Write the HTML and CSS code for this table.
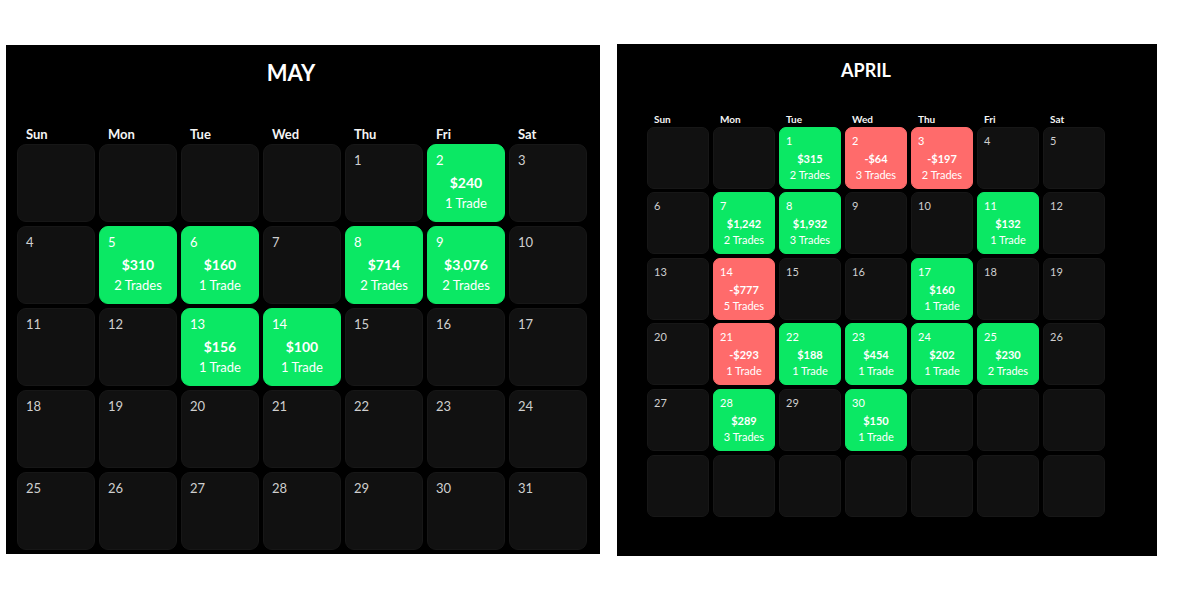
FILE: index.html
```html
<!DOCTYPE html>
<html>
<head>
<meta charset="utf-8">
<link rel="stylesheet" href="styles.css">
</head>
<body>
<div class="page">
  <section class="cal cal-may">
    <h2 class="title">MAY</h2>
    <div class="grid">
      <div class="dow">Sun</div><div class="dow">Mon</div><div class="dow">Tue</div><div class="dow">Wed</div><div class="dow">Thu</div><div class="dow">Fri</div><div class="dow">Sat</div>
      <div class="cell"></div>
      <div class="cell"></div>
      <div class="cell"></div>
      <div class="cell"></div>
      <div class="cell"><span class="num">1</span></div>
      <div class="cell win"><span class="num">2</span><span class="amt">$240</span><span class="trades">1 Trade</span></div>
      <div class="cell"><span class="num">3</span></div>

      <div class="cell"><span class="num">4</span></div>
      <div class="cell win"><span class="num">5</span><span class="amt">$310</span><span class="trades">2 Trades</span></div>
      <div class="cell win"><span class="num">6</span><span class="amt">$160</span><span class="trades">1 Trade</span></div>
      <div class="cell"><span class="num">7</span></div>
      <div class="cell win"><span class="num">8</span><span class="amt">$714</span><span class="trades">2 Trades</span></div>
      <div class="cell win"><span class="num">9</span><span class="amt">$3,076</span><span class="trades">2 Trades</span></div>
      <div class="cell"><span class="num">10</span></div>

      <div class="cell"><span class="num">11</span></div>
      <div class="cell"><span class="num">12</span></div>
      <div class="cell win"><span class="num">13</span><span class="amt">$156</span><span class="trades">1 Trade</span></div>
      <div class="cell win"><span class="num">14</span><span class="amt">$100</span><span class="trades">1 Trade</span></div>
      <div class="cell"><span class="num">15</span></div>
      <div class="cell"><span class="num">16</span></div>
      <div class="cell"><span class="num">17</span></div>

      <div class="cell"><span class="num">18</span></div>
      <div class="cell"><span class="num">19</span></div>
      <div class="cell"><span class="num">20</span></div>
      <div class="cell"><span class="num">21</span></div>
      <div class="cell"><span class="num">22</span></div>
      <div class="cell"><span class="num">23</span></div>
      <div class="cell"><span class="num">24</span></div>

      <div class="cell"><span class="num">25</span></div>
      <div class="cell"><span class="num">26</span></div>
      <div class="cell"><span class="num">27</span></div>
      <div class="cell"><span class="num">28</span></div>
      <div class="cell"><span class="num">29</span></div>
      <div class="cell"><span class="num">30</span></div>
      <div class="cell"><span class="num">31</span></div>
    </div>
  </section>

  <section class="cal cal-apr">
    <h2 class="title">APRIL</h2>
    <div class="grid">
      <div class="dow">Sun</div><div class="dow">Mon</div><div class="dow">Tue</div><div class="dow">Wed</div><div class="dow">Thu</div><div class="dow">Fri</div><div class="dow">Sat</div>
      <div class="cell"></div>
      <div class="cell"></div>
      <div class="cell win"><span class="num">1</span><span class="amt">$315</span><span class="trades">2 Trades</span></div>
      <div class="cell loss"><span class="num">2</span><span class="amt">-$64</span><span class="trades">3 Trades</span></div>
      <div class="cell loss"><span class="num">3</span><span class="amt">-$197</span><span class="trades">2 Trades</span></div>
      <div class="cell"><span class="num">4</span></div>
      <div class="cell"><span class="num">5</span></div>

      <div class="cell"><span class="num">6</span></div>
      <div class="cell win"><span class="num">7</span><span class="amt">$1,242</span><span class="trades">2 Trades</span></div>
      <div class="cell win"><span class="num">8</span><span class="amt">$1,932</span><span class="trades">3 Trades</span></div>
      <div class="cell"><span class="num">9</span></div>
      <div class="cell"><span class="num">10</span></div>
      <div class="cell win"><span class="num">11</span><span class="amt">$132</span><span class="trades">1 Trade</span></div>
      <div class="cell"><span class="num">12</span></div>

      <div class="cell"><span class="num">13</span></div>
      <div class="cell loss"><span class="num">14</span><span class="amt">-$777</span><span class="trades">5 Trades</span></div>
      <div class="cell"><span class="num">15</span></div>
      <div class="cell"><span class="num">16</span></div>
      <div class="cell win"><span class="num">17</span><span class="amt">$160</span><span class="trades">1 Trade</span></div>
      <div class="cell"><span class="num">18</span></div>
      <div class="cell"><span class="num">19</span></div>

      <div class="cell"><span class="num">20</span></div>
      <div class="cell loss"><span class="num">21</span><span class="amt">-$293</span><span class="trades">1 Trade</span></div>
      <div class="cell win"><span class="num">22</span><span class="amt">$188</span><span class="trades">1 Trade</span></div>
      <div class="cell win"><span class="num">23</span><span class="amt">$454</span><span class="trades">1 Trade</span></div>
      <div class="cell win"><span class="num">24</span><span class="amt">$202</span><span class="trades">1 Trade</span></div>
      <div class="cell win"><span class="num">25</span><span class="amt">$230</span><span class="trades">2 Trades</span></div>
      <div class="cell"><span class="num">26</span></div>

      <div class="cell"><span class="num">27</span></div>
      <div class="cell win"><span class="num">28</span><span class="amt">$289</span><span class="trades">3 Trades</span></div>
      <div class="cell"><span class="num">29</span></div>
      <div class="cell win"><span class="num">30</span><span class="amt">$150</span><span class="trades">1 Trade</span></div>
      <div class="cell"></div>
      <div class="cell"></div>
      <div class="cell"></div>

      <div class="cell"></div>
      <div class="cell"></div>
      <div class="cell"></div>
      <div class="cell"></div>
      <div class="cell"></div>
      <div class="cell"></div>
      <div class="cell"></div>
    </div>
  </section>
</div>
</body>
</html>
```

FILE: styles.css
```css
* { box-sizing: border-box; }

html, body {
  margin: 0;
  padding: 0;
  background: #ffffff;
}

body {
  font-family: "Lato", "Liberation Sans", sans-serif;
  color: #ffffff;
}

.page {
  display: flex;
  align-items: flex-start;
  gap: 17px;
  padding: 44px 0 0 6px;
}

.cal {
  background: #000000;
  display: flex;
  flex-direction: column;
}

.title {
  margin: 0;
  font-weight: 700;
  text-align: center;
  color: #ffffff;
}

.grid {
  display: grid;
}

.dow {
  font-weight: 700;
  color: #f4f4f4;
  white-space: nowrap;
}

.cell {
  background: #111111;
  border: 1px solid #171717;
  display: flex;
  flex-direction: column;
  align-items: center;
}

.num {
  align-self: flex-start;
  color: #cfcfcf;
}

.cell.win {
  background: #0be864;
  border-color: #0be864;
}

.cell.loss {
  background: #ff6b6b;
  border-color: #ff6b6b;
}

.cell.win .num,
.cell.loss .num {
  color: #ffffff;
}

.amt {
  font-weight: 700;
  color: #ffffff;
}

.trades {
  color: #ffffff;
}

/* ---- MAY ---- */
.cal-may {
  width: 594px;
  height: 509px;
  margin-top: 1px;
  padding: 14px 0 0 11px;
}

.cal-may .title {
  width: 570px;
  padding-right: 22px;
  font-size: 22px;
  line-height: 28px;
}

.cal-may .grid {
  margin-top: 39px;
  grid-template-columns: repeat(7, 78px);
  grid-template-rows: 14px;
  grid-auto-rows: 78px;
  column-gap: 4px;
  row-gap: 4px;
}

.cal-may .dow {
  font-size: 13px;
  line-height: 16px;
  height: 14px;
  padding-left: 9px;
}

.cal-may .cell {
  border-radius: 9px;
  padding: 7px 8px 0 8px;
}

.cal-may .num {
  font-size: 13px;
  line-height: 16px;
}

.cal-may .amt {
  margin-top: 5px;
  font-size: 14px;
  line-height: 20px;
}

.cal-may .trades {
  font-size: 13px;
  line-height: 20px;
}

/* ---- APRIL ---- */
.cal-apr {
  width: 540px;
  height: 512px;
  padding: 16px 0 0 30px;
}

.cal-apr .title {
  width: 458px;
  padding-right: 20px;
  font-size: 18px;
  line-height: 20px;
}

.cal-apr .grid {
  margin-top: 33px;
  grid-template-columns: repeat(7, 62px);
  grid-template-rows: 10px;
  grid-auto-rows: 62px;
  column-gap: 4px;
  row-gap: 3.6px;
}

.cal-apr .dow {
  font-size: 10px;
  line-height: 12px;
  height: 10px;
  padding-left: 7px;
}

.cal-apr .cell {
  border-radius: 7px;
  padding: 6px 6px 0 6px;
}

.cal-apr .num {
  font-size: 11px;
  line-height: 13px;
}

.cal-apr .amt {
  margin-top: 4px;
  font-size: 11px;
  line-height: 16px;
}

.cal-apr .trades {
  font-size: 11px;
  line-height: 15px;
}
```
